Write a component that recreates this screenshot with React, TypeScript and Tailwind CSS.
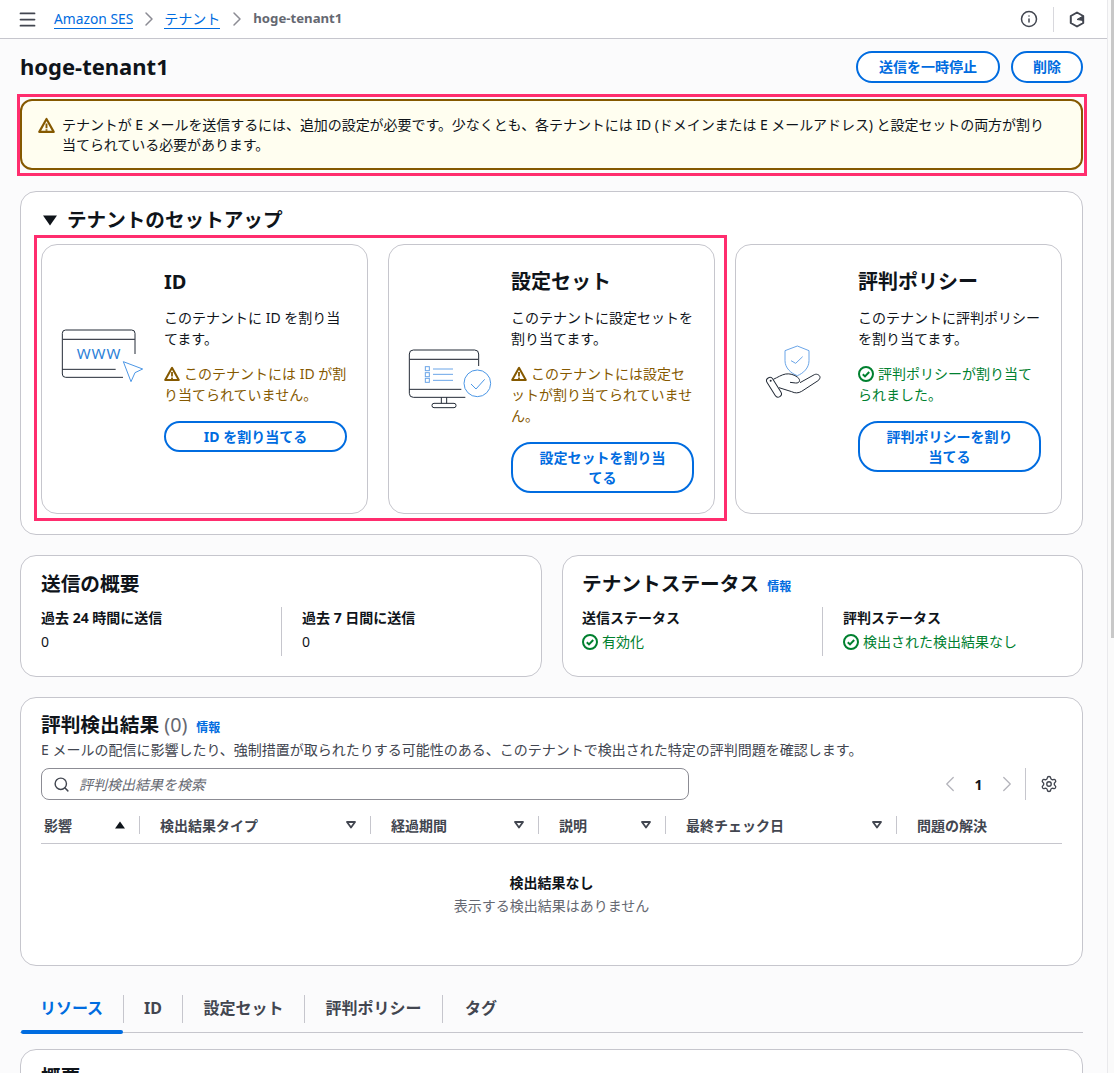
import React from "react";
import { Info, Search, Settings, ChevronLeft, ChevronRight, Menu } from "lucide-react";

const Warn = ({ className = "" }: { className?: string }) => (
  <svg viewBox="0 0 16 16" className={`w-4 h-4 inline-block shrink-0 ${className}`} fill="none" stroke="#855900" strokeWidth="2" strokeLinejoin="round">
    <path d="M8 1.800 1.200 14h13.600L8 1.800Z" />
    <path d="M8 6v4.500M8 11.500v1.500" strokeWidth="1.800" />
  </svg>
);

const Ok = ({ className = "" }: { className?: string }) => (
  <svg viewBox="0 0 16 16" className={`w-4 h-4 inline-block shrink-0 ${className}`} fill="none" stroke="#00802f" strokeWidth="2">
    <circle cx="8" cy="8" r="7" />
    <path d="M4.800 8.200 7 10.400l4.200-4.400" />
  </svg>
);

const WwwArt = () => (
  <svg width="95" height="70" viewBox="0 0 285 210" fill="none">
    <path d="M240 102V40a10 10 0 0 0-10-10H32a10 10 0 0 0-10 10v122a10 10 0 0 0 10 10h172" stroke="#232b37" strokeWidth="3" />
    <path d="M22 58h218" stroke="#424650" strokeWidth="3.600" />
    <path d="M22 148h160" stroke="#232b37" strokeWidth="3" />
    <text x="65" y="118" fontSize="45" letterSpacing="3" fill="#2c7fd8" fontFamily="'Noto Sans', sans-serif">WWW</text>
    <path d="M205 125 263 147 240 158 228 185Z" stroke="#4c97e6" strokeWidth="3" strokeLinejoin="round" />
  </svg>
);

const MonitorArt = () => (
  <svg width="95" height="70" viewBox="0 0 285 210" fill="none">
    <path d="M230 78V42a12 12 0 0 0-12-12H34a12 12 0 0 0-12 12v118a12 12 0 0 0 12 12h156" stroke="#232b37" strokeWidth="3" />
    <path d="M22 58h208" stroke="#424650" strokeWidth="3.600" />
    <path d="M22 148h156" stroke="#232b37" strokeWidth="3" />
    <path d="M118 172v18M134 172v18" stroke="#232b37" strokeWidth="3" />
    <rect x="90" y="190" width="72" height="13" rx="6" stroke="#232b37" strokeWidth="3" />
    <g stroke="#6aa5e8" strokeWidth="3">
      <rect x="70" y="80" width="12" height="12" />
      <rect x="70" y="98" width="12" height="12" />
      <rect x="70" y="115" width="12" height="12" />
      <path d="M93 87h60M93 103h60M93 121h60" />
    </g>
    <circle cx="226" cy="130" r="40" fill="#fff" stroke="#4c97e6" strokeWidth="3" />
    <path d="M207 132 222 147 248 118" stroke="#4c97e6" strokeWidth="3" />
  </svg>
);

const HandArt = () => (
  <svg width="75" height="65" viewBox="0 0 225 195" fill="none">
    <path d="M90 32 127 18 162 32V62C162 84 145 100 127 107 108 100 90 84 90 62V32Z" stroke="#6aa5e8" strokeWidth="3" />
    <path d="M108 62 122 70 143 50" stroke="#6aa5e8" strokeWidth="3" />
    <rect x="-10" y="-33" width="20" height="66" rx="10" transform="translate(57 142) rotate(-32)" stroke="#232b37" strokeWidth="3" />
    <path d="M55 118C68 112 80 104 92 102 104 100 118 104 128 112 138 120 134 130 122 129L105 127" stroke="#232b37" strokeWidth="3" />
    <path d="M135 128 178 104C186 100 196 106 195 113 194 118 190 122 186 124L140 154C130 160 120 160 110 155L72 143" stroke="#232b37" strokeWidth="3" />
    <circle cx="47" cy="122" r="3" fill="#232b37" />
  </svg>
);

function SetupCard({ art, artClass, title, desc, status, statusColor, button }: any) {
  return (
    <div className="w-[327px] h-[270px] rounded-2xl border border-[#c6c6cd] bg-white flex">
      <div className={`w-[122px] shrink-0 ${artClass}`}>{art}</div>
      <div className="w-[183px] pt-[24px]">
        <h3 className="text-[20px] leading-[26px] font-bold text-[#0f141a]">{title}</h3>
        <p className="mt-[12px] text-[14px] leading-[21px] text-[#0f141a]">{desc}</p>
        <p className={`mt-[14px] text-[14px] leading-[21px] ${statusColor}`}>{status}</p>
        <button className="mt-[16px] w-[183px] rounded-[20px] border-2 border-[#006ce0] bg-white px-[20px] py-[3.500px] text-[14px] leading-[20px] font-bold text-[#006ce0]">{button}</button>
      </div>
    </div>
  );
}

const Th = ({ w, label, icon }: { w: string; label: string; icon?: React.ReactNode }) => (
  <div className={`${w} flex items-center h-[18px] pl-[3px] pr-[4px] text-[14px] font-bold text-[#424650] justify-between`}>
    <span>{label}</span>
    {icon}
  </div>
);

const Sep = () => <div className="w-[1px] h-[18px] bg-[#c6c6cd] shrink-0" />;

const Down = () => (
  <svg width="10" height="8" viewBox="0 0 10 8" fill="none" stroke="#424650" strokeWidth="1.800" className="mr-[10px]">
    <path d="M1 1h8L5 6.500 1 1Z" fill="#fff" strokeLinejoin="round" />
  </svg>
);
const Up = () => (
  <svg width="10" height="8" viewBox="0 0 10 8" fill="#0f141a" className="mr-[10px]">
    <path d="M5 .5 10 7.500H0L5 .5Z" />
  </svg>
);

export default function App() {
  return (
    <div className="relative w-[1114px] h-[1073px] overflow-hidden bg-[#fbfbfc] text-[#0f141a] font-['Noto_Sans','Noto_Sans_CJK_JP',sans-serif]">
      <div className="absolute top-0 right-0 w-[7px] h-full bg-[#fafafa] border-l border-[#e9e9ec]">
        <div className="absolute right-0 top-0 w-[3px] h-[638px] bg-[#c8c8c8]" />
      </div>
      <header className="w-[1107px] h-[39px] bg-white border-b border-[#c6c6cd] flex items-center pl-[19px] pr-[24px] text-[14px]">
        <Menu size={21} strokeWidth={2} className="text-[#424650] -ml-[2.500px]" />
        <a className="ml-[16.500px] text-[13.800px] text-[#006ce0] border-b border-[#006ce0] leading-[18px]">Amazon SES</a>
        <ChevronRight size={24} strokeWidth={1.500} className="mx-[3.500px] text-[#8c8c94]" />
        <a className="text-[#006ce0] border-b border-[#006ce0] leading-[18px]">テナント</a>
        <ChevronRight size={24} strokeWidth={1.500} className="mx-[4.500px] text-[#8c8c94]" />
        <span className="text-[13.200px] font-bold text-[#656871]">hoge-tenant1</span>
        <div className="ml-auto flex items-center">
          <Info size={18} strokeWidth={2} className="text-[#424650]" />
          <div className="mx-[15px] w-[1px] h-[25px] bg-[#d8d8dd]" />
          <svg width="16" height="17" viewBox="0 0 16 17" fill="none" stroke="#424650" strokeWidth="2" className="mr-[-2px]">
            <path d="M8 1.500 14.200 5v7L8 15.500 1.800 12V5L8 1.500Z" strokeLinejoin="round" />
            <path d="M8 8.500 14.200 5v4.500L8 8.500Z" fill="#424650" strokeWidth="1" />
          </svg>
        </div>
      </header>

      <main className="pl-[20px] w-[1083px]">
        <div className="flex items-center justify-between h-[31px] mt-[12px]">
          <h1 className="text-[22px] font-bold leading-[31px]">hoge-tenant1</h1>
          <div className="flex gap-[11px]">
            <button className="h-[32px] w-[144px] rounded-[20px] border-2 border-[#006ce0] bg-white text-[14px] font-bold text-[#006ce0]">送信を一時停止</button>
            <button className="h-[32px] w-[72px] rounded-[20px] border-2 border-[#006ce0] bg-white text-[14px] font-bold text-[#006ce0]">削除</button>
          </div>
        </div>

        <div className="relative mt-[17px]">
          <div className="absolute -left-[3px] -right-[4px] -top-[5px] -bottom-[6px] border-[3px] border-[#ff2d6e] pointer-events-none" />
          <div className="h-[71px] rounded-[12px] border-2 border-[#855900] bg-[#fffef0] pl-[16px] pr-[30px] pt-[14px] flex gap-[7px] text-[14px] leading-[20px] tracking-[-0.06px] text-[#0f141a]">
            <Warn className="mt-[2px] w-[17px] h-[17px]" />
            <p>テナントが E メールを送信するには、追加の設定が必要です。少なくとも、各テナントには ID (ドメインまたは E メールアドレス) と設定セットの両方が割り当てられている必要があります。</p>
          </div>
        </div>

        <section className="mt-[21px] h-[344px] rounded-2xl border border-[#c6c6cd] bg-white pl-[20px] pt-[14px] relative">
          <div className="flex items-center gap-[10px] h-[28px]">
            <svg width="14" height="11" viewBox="0 0 14 11" fill="#0f141a" className="ml-[2px]"><path d="M0 .5h14L7 10.500 0 .5Z" /></svg>
            <h2 className="text-[19.600px] font-bold leading-[28px]">テナントのセットアップ</h2>
          </div>
          <div className="relative mt-[10px] flex gap-[20px]">
            <div className="absolute -left-[7px] -top-[9px] w-[693px] h-[286px] border-[3px] border-[#ff2d6e] pointer-events-none" />
            <SetupCard art={<WwwArt />} artClass="pl-[13px] pt-[75px]" title="ID" desc="このテナントに ID を割り当てます。" statusColor="text-[#855900]" status={<><Warn className="align-[-3px] mr-[4px]" />このテナントには ID が割り当てられていません。</>} button="ID を割り当てる" />
            <SetupCard art={<MonitorArt />} artClass="pl-[13px] pt-[95px]" title="設定セット" desc="このテナントに設定セットを割り当てます。" statusColor="text-[#855900]" status={<><Warn className="align-[-3px] mr-[4px]" />このテナントには設定セットが割り当てられていません。</>} button="設定セットを割り当てる" />
            <SetupCard art={<HandArt />} artClass="pl-[19px] pt-[95px]" title="評判ポリシー" desc="このテナントに評判ポリシーを割り当てます。" statusColor="text-[#00802f]" status={<><Ok className="align-[-3px] mr-[4px]" />評判ポリシーが割り当てられました。</>} button="評判ポリシーを割り当てる" />
          </div>
        </section>

        <div className="mt-[20px] flex gap-[20px]">
          <div className="w-[522px] h-[122px] rounded-2xl border border-[#c6c6cd] bg-white pl-[20px] pt-[15px]">
            <h2 className="text-[19.700px] font-bold leading-[26px] h-[26px]">送信の概要</h2>
            <div className="mt-[10px] flex">
              <div className="w-[240px] h-[49px]">
                <div className="text-[14px] font-bold leading-[20px] pt-[1px]">過去 24 時間に送信</div>
                <div className="mt-[4px] text-[14px] leading-[20px]">0</div>
              </div>
              <div className="w-[1px] h-[49px] bg-[#c6c6cd]" />
              <div className="pl-[20px]">
                <div className="text-[14px] font-bold leading-[20px] pt-[1px]">過去 7 日間に送信</div>
                <div className="mt-[4px] text-[14px] leading-[20px]">0</div>
              </div>
            </div>
          </div>
          <div className="w-[521px] h-[122px] rounded-2xl border border-[#c6c6cd] bg-white pl-[19px] pt-[15px]">
            <div className="h-[26px] flex items-center">
              <h2 className="text-[19.700px] font-bold leading-[26px]">テナントステータス</h2>
              <a className="ml-[8px] mt-[5px] text-[12px] font-bold text-[#006ce0]">情報</a>
            </div>
            <div className="mt-[10px] flex">
              <div className="w-[240px] h-[49px]">
                <div className="text-[14px] font-bold leading-[20px] pt-[1px]">送信ステータス</div>
                <div className="mt-[4px] text-[14px] leading-[20px] text-[#00802f] flex items-center gap-[4px]"><Ok />有効化</div>
              </div>
              <div className="w-[1px] h-[49px] bg-[#c6c6cd]" />
              <div className="pl-[20px]">
                <div className="text-[14px] font-bold leading-[20px] pt-[1px]">評判ステータス</div>
                <div className="mt-[4px] text-[14px] leading-[20px] text-[#00802f] flex items-center gap-[4px]"><Ok />検出された検出結果なし</div>
              </div>
            </div>
          </div>
        </div>

        <section className="mt-[20px] h-[269px] rounded-2xl border border-[#c6c6cd] bg-white px-[20px] pt-[13px]">
          <div className="h-[28px] flex items-center">
            <h2 className="text-[19.700px] font-bold leading-[28px]">評判検出結果 <span className="font-normal text-[#656871]">(0)</span></h2>
            <a className="ml-[9px] mt-[5px] text-[12px] font-bold text-[#006ce0]">情報</a>
          </div>
          <p className="text-[14px] leading-[18px] text-[#424650] mt-[2px]">E メールの配信に影響したり、強制措置が取られたりする可能性のある、このテナントで検出された特定の評判問題を確認します。</p>
          <div className="mt-[9px] flex items-center h-[32px]">
            <div className="w-[648px] h-[32px] rounded-lg border border-[#8c8c94] bg-white flex items-center pl-[11px] gap-[9px]">
              <Search size={17} strokeWidth={2} className="text-[#424650]" />
              <span className="text-[14px] italic text-[#656871]">評判検出結果を検索</span>
            </div>
            <div className="ml-auto flex items-center h-[32px]">
              <ChevronLeft size={26} strokeWidth={1.200} className="text-[#b4b4bb]" />
              <span className="mx-[11.500px] text-[14px] font-bold">1</span>
              <ChevronRight size={26} strokeWidth={1.200} className="text-[#b4b4bb]" />
              <div className="ml-[5px] w-[1px] h-[32px] bg-[#c6c6cd]" />
              <Settings size={18} strokeWidth={1.800} className="ml-[14px] mr-[4px] text-[#424650]" />
            </div>
          </div>
          <div className="mt-[16px] flex items-center border-b border-[#c6c6cd] pb-[9px] h-[28px] whitespace-nowrap">
            <Th w="w-[98px]" label="影響" icon={<Up />} />
            <Sep />
            <Th w="w-[230px] pl-[20px]" label="検出結果タイプ" icon={<Down />} />
            <Sep />
            <Th w="w-[167px] pl-[20px]" label="経過期間" icon={<Down />} />
            <Sep />
            <Th w="w-[126px] pl-[20px]" label="説明" icon={<Down />} />
            <Sep />
            <Th w="w-[230px] pl-[20px]" label="最終チェック日" icon={<Down />} />
            <Sep />
            <Th w="w-[150px] pl-[20px]" label="問題の解決" />
          </div>
          <div className="mt-[29px] text-center">
            <div className="text-[14px] font-bold leading-[20px]">検出結果なし</div>
            <div className="mt-[3px] text-[14px] leading-[20px] text-[#656871]">表示する検出結果はありません</div>
          </div>
        </section>

        <div className="mt-[26px] h-[41px] border-b border-[#c6c6cd] flex relative text-[16px] font-bold text-[#424650]">
          <div className="relative w-[103px] h-[41px] text-center leading-[33px] text-[#006ce0]">
            リソース
            <div className="absolute left-[1px] right-0 bottom-[-1px] h-[4px] rounded-[2px] bg-[#006ce0]" />
          </div>
          <div className="w-[1px] h-[28px] bg-[#c6c6cd] mt-[3px]" />
          <div className="w-[58px] text-center leading-[33px]">ID</div>
          <div className="w-[1px] h-[28px] bg-[#c6c6cd] mt-[3px]" />
          <div className="w-[121px] text-center leading-[33px]">設定セット</div>
          <div className="w-[1px] h-[28px] bg-[#c6c6cd] mt-[3px]" />
          <div className="w-[137px] text-center leading-[33px]">評判ポリシー</div>
          <div className="w-[1px] h-[28px] bg-[#c6c6cd] mt-[3px]" />
          <div className="w-[76px] text-center leading-[33px]">タグ</div>
        </div>

        <section className="mt-[16px] h-[120px] rounded-2xl border border-[#c6c6cd] bg-white pl-[20px] pt-[14px]">
          <h2 className="text-[19.700px] font-bold leading-[26px]">概要</h2>
        </section>
      </main>
    </div>
  );
}
